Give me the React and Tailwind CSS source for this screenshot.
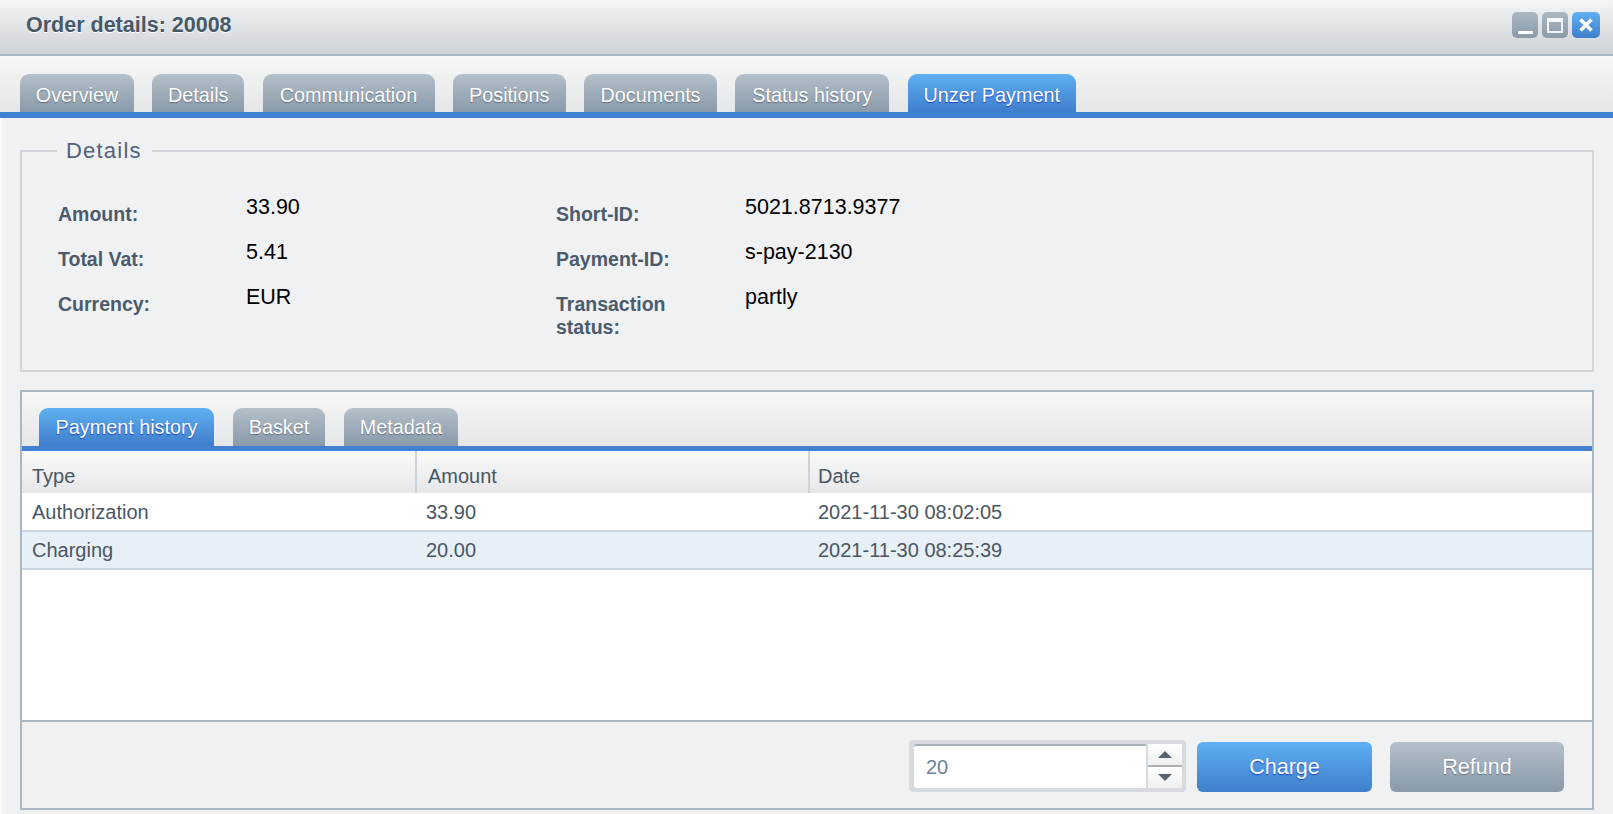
const font = { fontFamily: '"Liberation Sans", Arial, sans-serif' }

const mainTabs = [
  { label: 'Overview', w: 'w-[114px]' },
  { label: 'Details', w: 'w-[92px]' },
  { label: 'Communication', w: 'w-[172px]' },
  { label: 'Positions', w: 'w-[113px]' },
  { label: 'Documents', w: 'w-[133px]' },
  { label: 'Status history', w: 'w-[154px]' },
  { label: 'Unzer Payment', w: 'w-[168.5px]', active: true },
]

const subTabs = [
  { label: 'Payment history', w: 'w-[175px]', active: true },
  { label: 'Basket', w: 'w-[92px]' },
  { label: 'Metadata', w: 'w-[114px]' },
]

const rows = [
  { type: 'Authorization', amount: '33.90', date: '2021-11-30 08:02:05', h: 'h-[39px]' },
  { type: 'Charging', amount: '20.00', date: '2021-11-30 08:25:39', h: 'h-[38px]', selected: true },
]

function Tab({ label, w, active, className = '' }) {
  return (
    <div
      className={`${w} ${className} h-[38px] rounded-t-[9px] flex items-center justify-center text-[19.8px] text-white ${
        active
          ? 'bg-gradient-to-b from-[#5fb0f2] to-[#3f7ecb] [text-shadow:0_1px_1px_#1d3fc4]'
          : 'bg-gradient-to-b from-[#b4c0ca] to-[#8a9aa9] [text-shadow:0_1px_1px_rgba(60,70,85,0.55)]'
      }`}
    >
      {label}
    </div>
  )
}

function Field({ label, value, labelW }) {
  return (
    <div className="flex h-[45px]">
      <div className={`${labelW} pt-[8px] text-[19.5px] leading-[23px] font-bold text-[#4c5b6b]`}>{label}</div>
      <div className="text-[21.5px] leading-[24px] text-black">{value}</div>
    </div>
  )
}

function WinButton({ blue, children }) {
  return (
    <div
      className={`h-[26px] rounded-[5px] flex items-center justify-center ${
        blue ? 'w-[28px] bg-gradient-to-b from-[#5fb0f2] to-[#3f7ecb]' : 'w-[26px] bg-gradient-to-b from-[#abb8c3] to-[#8a9aa9]'
      }`}
    >
      {children}
    </div>
  )
}

export default function App() {
  return (
    <div className="w-full h-[814px] overflow-hidden flex flex-col bg-[#f0f1f3]" style={font}>
      {/* title bar */}
      <div className="h-[56px] shrink-0 flex items-start justify-between pl-[26px] pr-[13px] border-b-[2px] border-[#a9b6c3] bg-gradient-to-b from-[#f4f5f6] to-[#cdd2d7]">
        <div className="mt-[12px] text-[21.5px] leading-[26px] font-bold text-[#475868] [text-shadow:0_1px_0_#ffffff]">
          Order details: 20008
        </div>
        <div className="mt-[12px] flex gap-[4px]">
          <WinButton>
            <div className="w-[15px] h-[3px] mt-[14px] bg-white" />
          </WinButton>
          <WinButton>
            <div className="w-[16px] h-[15px] border-[2px] border-t-[4px] border-white/90" />
          </WinButton>
          <WinButton blue>
            <svg width="16" height="16" viewBox="0 0 16 16">
              <path d="M2.5 2.5 L13.5 13.5 M13.5 2.5 L2.5 13.5" stroke="#fff" strokeWidth="3.4" fill="none" />
            </svg>
          </WinButton>
        </div>
      </div>

      {/* main tabs */}
      <div className="h-[62px] shrink-0 flex items-end gap-[18.25px] pl-[20px] border-b-[6px] border-[#417fd0] bg-gradient-to-b from-[#f7f7f7] to-[#e5e6e8]">
        {mainTabs.map(t => (
          <Tab key={t.label} {...t} className="pt-[5px]" />
        ))}
      </div>

      <div className="flex-1 pl-[18px] pr-[20px] mr-[-1px] border-l-[2px] border-[#f8f9fa]">
        {/* details */}
        <fieldset className="mt-[19px] h-[235px] border-[2px] border-[#d0d6dc] pl-[36px] pt-[30px]">
          <legend className="ml-[-1px] pl-[9px] pr-[10px] text-[22px] leading-[28px] tracking-[0.055em] text-[#56607a]">Details</legend>
          <div className="flex">
            <div className="w-[498px]">
              <Field label="Amount:" value="33.90" labelW="w-[188px]" />
              <Field label="Total Vat:" value="5.41" labelW="w-[188px]" />
              <Field label="Currency:" value="EUR" labelW="w-[188px]" />
            </div>
            <div>
              <Field label="Short-ID:" value="5021.8713.9377" labelW="w-[189px]" />
              <Field label="Payment-ID:" value="s-pay-2130" labelW="w-[189px]" />
              <Field label={<>Transaction<br />status:</>} value="partly" labelW="w-[189px]" />
            </div>
          </div>
        </fieldset>

        {/* history panel */}
        <div className="mt-[18px] h-[420px] flex flex-col border-[2px] border-[#a9b6c3]">
          <div className="h-[59px] shrink-0 flex items-end gap-[19px] pl-[17px] border-b-[5px] border-[#417fd0] bg-gradient-to-b from-[#f7f7f7] to-[#e5e6e8]">
            {subTabs.map(t => (
              <Tab key={t.label} {...t} className="pt-[1px]" />
            ))}
          </div>

          <div className="flex-1 flex flex-col bg-white text-[20px] text-[#4a5663]">
            <div className="h-[42px] shrink-0 grid grid-cols-[395px_393px_1fr] bg-gradient-to-b from-[#fafafa] to-[#e6e7e9]">
              <div className="pl-[10px] pt-[7px] flex items-center border-r-[2px] border-[#cdd3d9]">Type</div>
              <div className="pl-[11px] pt-[7px] flex items-center border-r-[2px] border-[#cdd3d9]">Amount</div>
              <div className="pl-[8px] pt-[7px] flex items-center">Date</div>
            </div>
            {rows.map(r => (
              <div
                key={r.type}
                className={`${r.h} grid grid-cols-[395px_393px_1fr] items-center border-b-[2px] border-[#cdd6e0] ${
                  r.selected ? 'bg-[#e8f0f7]' : 'bg-white'
                }`}
              >
                <div className="pl-[10px]">{r.type}</div>
                <div className="pl-[9px]">{r.amount}</div>
                <div className="pl-[8px]">{r.date}</div>
              </div>
            ))}
          </div>

          {/* toolbar */}
          <div className="h-[88px] shrink-0 flex items-start justify-end pr-[28px] pt-[18px] border-t-[2px] border-[#a9b6c3] bg-[#f0f1f3]">
            <div className="w-[277px] h-[52px] rounded-[4px] py-[4px] pl-[5px] pr-[4px] bg-[#d6dadf] flex">
              <div className="flex-1 bg-white rounded-l-[3px] border-t-[2px] border-[#a9b0b7] pl-[12px] flex items-center text-[20px] text-[#6d8196]">
                20
              </div>
              <div className="w-[36px] flex flex-col border-l-[2px] border-[#d6dadf]">
                <div className="flex-1 flex items-center justify-center bg-gradient-to-b from-[#ffffff] to-[#eeeff0]">
                  <div className="w-0 h-0 border-x-[7px] border-x-transparent border-b-[7px] border-b-[#57636f]" />
                </div>
                <div className="h-[2px] bg-[#a9b0b7]" />
                <div className="flex-1 flex items-center justify-center bg-gradient-to-b from-[#ffffff] to-[#eeeff0]">
                  <div className="w-0 h-0 border-x-[7px] border-x-transparent border-t-[7px] border-t-[#57636f]" />
                </div>
              </div>
            </div>
            <button className="ml-[11px] mt-[2px] w-[175px] h-[50px] rounded-[6px] text-[21.5px] text-white bg-gradient-to-b from-[#5fb0f2] to-[#3f7ecb] [text-shadow:0_1px_1px_#1d3fc4]">
              Charge
            </button>
            <button className="ml-[18px] mt-[2px] w-[174px] h-[50px] rounded-[6px] text-[21.5px] text-white bg-gradient-to-b from-[#b4c0ca] to-[#8a9aa9] [text-shadow:0_1px_1px_rgba(60,70,85,0.55)]">
              Refund
            </button>
          </div>
        </div>
      </div>
    </div>
  )
}
